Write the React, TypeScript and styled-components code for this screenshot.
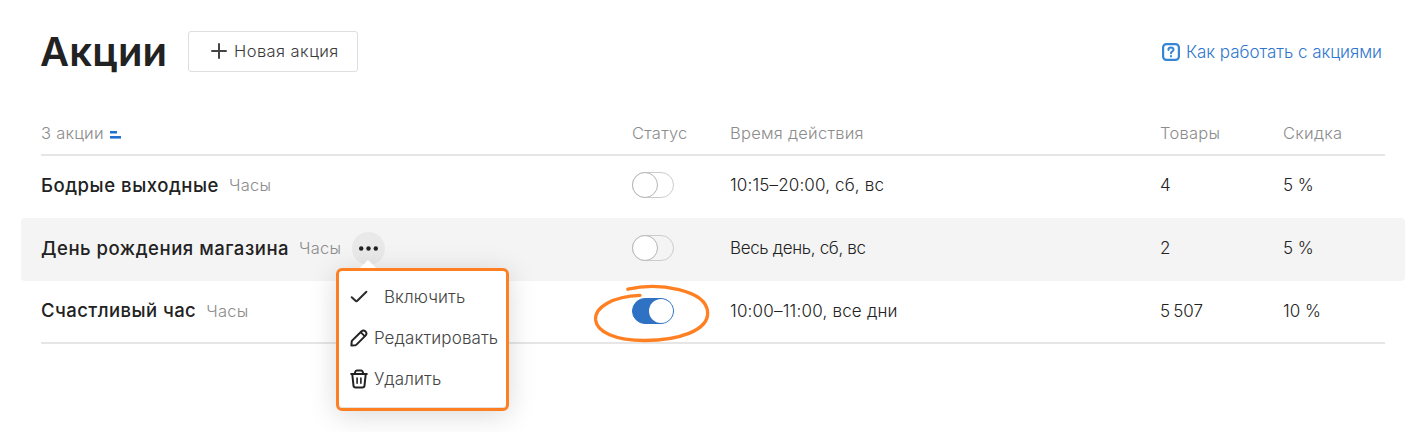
import React from 'react';
import styled, { createGlobalStyle, css } from 'styled-components';

const GlobalStyle = createGlobalStyle`
  * { box-sizing: border-box; }
  body {
    margin: 0;
    background: #fff;
    color: #222;
    font-family: Inter, "Liberation Sans", sans-serif;
    font-size: 17px;
    overflow: hidden;
  }
`;

const Page = styled.main`
  width: 1418px;
  height: 432px;
  padding: 31px 13px 0 21px;
  overflow: hidden;
`;

const Header = styled.header`
  display: flex;
  align-items: flex-start;
  height: 80px;
  padding: 0 23px 0 19px;
`;

const Title = styled.h1`
  width: 148px;
  margin: 0;
  font-size: 40px;
  font-weight: 600;
  line-height: 42px;
  letter-spacing: 0.2px;
`;

const NewButton = styled.button`
  display: flex;
  align-items: center;
  width: 170px;
  height: 41px;
  padding: 0 0 2px 22px;
  gap: 7px;
  border: 1.5px solid #dedede;
  border-radius: 3px;
  background: #fff;
  color: #3a3a3a;
  font: inherit;
  font-size: 16.5px;
  font-weight: 350;
  letter-spacing: 0.45px;
  white-space: nowrap;
`;

const HelpLink = styled.a`
  display: flex;
  align-items: center;
  gap: 6px;
  height: 42px;
  margin-left: auto;
  color: #2f76cf;
  font-weight: 350;
  letter-spacing: -0.04px;
  white-space: nowrap;
`;

const columns = css`
  display: grid;
  grid-template-columns: 591px 98px 430px 123px 102px;
  align-items: center;
`;

const HeadRow = styled.div`
  ${columns}
  height: 43px;
  padding: 0 20px;
  color: #8c8c8c;
  font-size: 16.5px;
  font-weight: 350;
  letter-spacing: 0.25px;
`;

const Rule = styled.div`
  height: 2px;
  margin: 0 20px;
  background: #e6e6e6;
`;

const Row = styled.div<{ $active?: boolean; $height: number; $lift: number }>`
  ${columns}
  height: ${p => p.$height}px;
  padding: 0 20px ${p => p.$lift}px;
  border-radius: 4px;
  background: ${p => (p.$active ? '#f4f4f4' : 'transparent')};
  color: #222;
  font-weight: 360;
`;

const Cell = styled.div<{ $spacing?: number }>`
  display: flex;
  align-items: center;
  position: relative;
  white-space: nowrap;
  letter-spacing: ${p => p.$spacing ?? 0}px;
`;

const Name = styled.span<{ $spacing: number }>`
  padding-bottom: 1px;
  color: #222;
  font-size: 18.5px;
  font-weight: 500;
  letter-spacing: ${p => p.$spacing}px;
`;

const Kind = styled.span`
  margin-left: 10px;
  color: #8c8c8c;
  font-size: 16.5px;
  letter-spacing: 0.25px;
`;

const Switch = styled.span<{ $on?: boolean }>`
  display: flex;
  justify-content: ${p => (p.$on ? 'flex-end' : 'flex-start')};
  align-items: center;
  width: 42px;
  height: 26px;
  border: 1px solid ${p => (p.$on ? '#2f72c4' : '#ccc')};
  border-radius: 13px;
  background: ${p => (p.$on ? '#2f72c4' : 'transparent')};
`;

const Knob = styled.span<{ $on?: boolean }>`
  width: ${p => (p.$on ? 24 : 26)}px;
  height: ${p => (p.$on ? 24 : 26)}px;
  margin-left: -1px;
  border: ${p => (p.$on ? '0' : '1px solid #b5b5b5')};
  border-radius: 50%;
  background: #fff;
`;

const Highlight = styled.svg`
  position: absolute;
  left: -41px;
  top: -16px;
  overflow: visible;
`;

const MoreButton = styled.div`
  position: relative;
  display: flex;
  align-items: center;
  justify-content: center;
  width: 33px;
  height: 33px;
  margin-left: 10.5px;
  border-radius: 50%;
  background: #e9e9e9;
`;

const Menu = styled.div`
  position: absolute;
  z-index: 2;
  left: -16px;
  top: 36px;
  width: 173px;
  height: 143px;
  padding: 6px 0 0 11px;
  border: 3px solid #ff8022;
  border-radius: 6px;
  background: #fff;
  box-shadow: 0 4px 28px rgba(0, 0, 0, 0.15), inset 0 -1px 0 #e2e2e2;
  color: #444;
  letter-spacing: 0.12px;

  &::before {
    content: "";
    position: absolute;
    left: 21.5px;
    top: -11px;
    border: solid transparent;
    border-width: 0 8px 8px;
    border-bottom-color: #fff;
  }
`;

const MenuItem = styled.div<{ $gap: number }>`
  display: flex;
  align-items: center;
  gap: ${p => p.$gap}px;
  height: 41px;
`;

const PlusIcon = () => (
  <svg width="16" height="16" viewBox="0 0 16 16" stroke="#444" strokeWidth="2" strokeLinecap="round">
    <path d="M8 1v14M1 8h14" />
  </svg>
);

const HelpIcon = () => (
  <svg width="18" height="18" viewBox="0 0 18 18" fill="none" stroke="#3585d5" strokeWidth="2" strokeLinecap="round">
    <rect x="1.1" y="1.1" width="15.8" height="15.8" rx="3.4" strokeWidth="2.2" />
    <path d="M6.4 6.9C6.5 3.7 11.7 3.9 11.5 6.8C11.4 8.5 9 8.4 9 10.3" />
    <path d="M9 13.2v.1" strokeWidth="2.2" />
  </svg>
);

const SortIcon = () => (
  <svg width="11" height="9" viewBox="0 0 11 9" fill="#1f72d0">
    <rect x="0" y="1" width="7" height="2.5" />
    <rect x="0" y="6" width="11" height="2.6" />
  </svg>
);

const SortLabel = styled.span`
  display: flex;
  align-items: center;
  gap: 6px;

  svg { margin-top: 3px; }
`;

const DotsIcon = () => (
  <svg width="21" height="5" viewBox="0 0 21 5" fill="#222">
    <circle cx="3.2" cy="2.5" r="2.2" />
    <circle cx="10.5" cy="2.5" r="2.2" />
    <circle cx="17.8" cy="2.5" r="2.2" />
  </svg>
);

const CheckIcon = () => (
  <svg width="18" height="18" viewBox="0 0 18 18" fill="none" stroke="#2b2b2b" strokeWidth="2" strokeLinecap="round" strokeLinejoin="round">
    <path d="M1.7 9.2L5.8 12.9Q6.6 13.5 7.3 12.8L16.4 3.8" />
  </svg>
);

const PencilIcon = () => (
  <svg width="18" height="18" viewBox="0 0 18 18" fill="none" stroke="#222" strokeWidth="2" strokeLinecap="round" strokeLinejoin="round">
    <path d="M1.4 16.4L1.7 12.6Q1.8 11.9 2.3 11.4L11.6 2.2Q13.5 .6 15.5 2.4Q17.3 4.4 15.7 6.4L6.5 15.6Q6 16.1 5.3 16.2Z" />
    <path d="M10.9 3.4L14.4 6.9" strokeWidth="1.9" />
  </svg>
);

const TrashIcon = () => (
  <svg width="18" height="20" viewBox="0 0 18 20" fill="none" stroke="#222" strokeWidth="2" strokeLinecap="round" strokeLinejoin="round">
    <path d="M1.2 5h15.6" />
    <path d="M4.8 4.5L5.4 2.5Q5.8 1.4 6.9 1.4H11.1Q12.2 1.4 12.6 2.5L13.2 4.5" />
    <path d="M2.3 5.3L3.5 16.6Q3.7 18.5 5.6 18.5H12.4Q14.3 18.5 14.5 16.6L15.7 5.3" />
    <path d="M7.1 9v5.2M10.9 9v5.2" strokeWidth="1.6" />
  </svg>
);

const ItemMenu = () => (
  <Menu>
    <MenuItem $gap={16}><CheckIcon />Включить</MenuItem>
    <MenuItem $gap={6}><PencilIcon />Редактировать</MenuItem>
    <MenuItem $gap={6}><TrashIcon />Удалить</MenuItem>
  </Menu>
);

type Promo = {
  name: string;
  nameSpacing: number;
  time: string;
  timeSpacing: number;
  goods: string;
  discount: string;
  height: number;
  lift: number;
  on?: boolean;
  active?: boolean;
};

const promos: Promo[] = [
  { name: 'Бодрые выходные', nameSpacing: 0.54, time: '10:15–20:00, сб, вс', timeSpacing: 0.15, goods: '4', discount: '5 %', height: 62, lift: 4 },
  { name: 'День рождения магазина', nameSpacing: 0.53, time: 'Весь день, сб, вс', timeSpacing: -0.35, goods: '2', discount: '5 %', height: 63, lift: 3, active: true },
  { name: 'Счастливый час', nameSpacing: 0.44, time: '10:00–11:00, все дни', timeSpacing: 0.2, goods: '5\u2009507', discount: '10 %', height: 61, lift: 2, on: true },
];

export default function App() {
  return (
    <Page>
      <GlobalStyle />
      <Header>
        <Title>Акции</Title>
        <NewButton><PlusIcon />Новая акция</NewButton>
        <HelpLink><HelpIcon />Как работать с акциями</HelpLink>
      </Header>
      <HeadRow>
        <SortLabel>3 акции<SortIcon /></SortLabel>
        <span>Статус</span>
        <span>Время действия</span>
        <span>Товары</span>
        <span>Скидка</span>
      </HeadRow>
      <Rule />
      {promos.map(p => (
        <Row key={p.name} $active={p.active} $height={p.height} $lift={p.lift}>
          <Cell>
            <Name $spacing={p.nameSpacing}>{p.name}</Name>
            <Kind>Часы</Kind>
            {p.active && <MoreButton><DotsIcon /><ItemMenu /></MoreButton>}
          </Cell>
          <Cell>
            <Switch $on={p.on}><Knob $on={p.on} /></Switch>
            {p.on && (
              <Highlight width="120" height="60" viewBox="0 0 120 60" fill="none" stroke="#ff8022" strokeWidth="3.3" strokeLinecap="round">
                <path d="M36.8 7.2C68 0 115 8 116.6 30C118 49 86 58.5 54 58.5C24 58.5 6 50 4.6 38C3.5 25 22 14.5 49 13.4" />
              </Highlight>
            )}
          </Cell>
          <Cell $spacing={p.timeSpacing}>{p.time}</Cell>
          <Cell>{p.goods}</Cell>
          <Cell>{p.discount}</Cell>
        </Row>
      ))}
      <Rule />
    </Page>
  );
}
